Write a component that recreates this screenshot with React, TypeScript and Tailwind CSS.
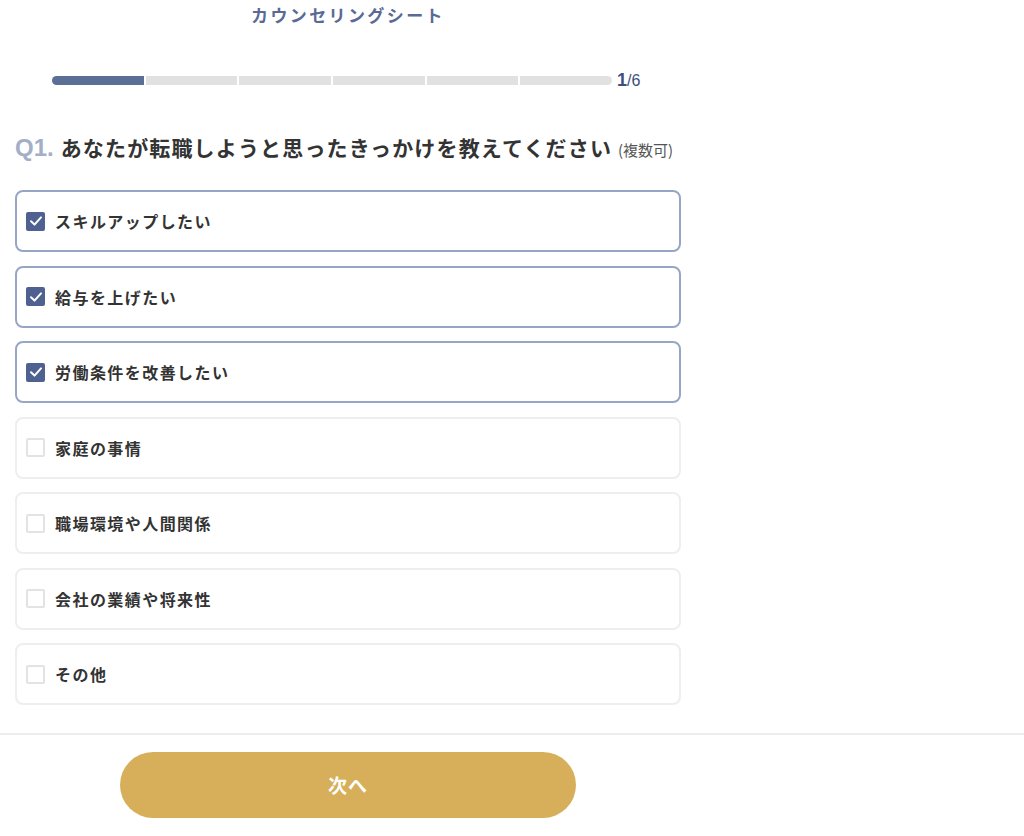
import React, { useState } from 'react'

const options = [
  'スキルアップしたい',
  '給与を上げたい',
  '労働条件を改善したい',
  '家庭の事情',
  '職場環境や人間関係',
  '会社の業績や将来性',
  'その他',
]

const Checkbox = ({ checked }: { checked: boolean }) =>
  checked ? (
    <span className="flex h-[19px] w-[19px] shrink-0 items-center justify-center rounded-[2px] bg-[#4f6190]">
      <svg width="14" height="14" viewBox="0 0 14 14" fill="none">
        <path d="M2 7.3 5.5 10.6 12 3.4" stroke="white" strokeWidth="2" strokeLinecap="round" strokeLinejoin="round" />
      </svg>
    </span>
  ) : (
    <span className="h-[19px] w-[19px] shrink-0 rounded-[2px] border-2 border-[#e3e3e3] bg-white" />
  )

export default function App() {
  const [selected, setSelected] = useState<boolean[]>([true, true, true, false, false, false, false])
  const steps = 6
  const current = 1

  const toggle = (i: number) =>
    setSelected(prev => prev.map((v, j) => (j === i ? !v : v)))

  return (
    <div className="min-h-[836px] w-[1024px] bg-white font-['Noto_Sans_CJK_JP','Noto_Sans',sans-serif] text-[#333]">
      <div className="w-[696px] px-[15px]">
        {/* title */}
        <h1 className="pt-[4px] text-center text-[17px] font-bold leading-[22px] tracking-[0.14em] text-[#5a6a94]">
          カウンセリングシート
        </h1>

        {/* progress */}
        <div className="mt-[41px] flex items-center justify-center gap-[5px]">
          <div className="flex h-[9px] w-[560px] gap-[2px] overflow-hidden rounded-full">
            {Array.from({ length: steps }).map((_, i) => (
              <div key={i} className={`flex-1 ${i < current ? 'bg-[#5a6e96]' : 'bg-[#e1e1e1]'}`} />
            ))}
          </div>
          <div className="w-[27px] whitespace-nowrap font-['Liberation_Sans',sans-serif] text-[#3d4f7e]">
            <span className="text-[18px] font-bold">1</span>
            <span className="text-[16px]">/6</span>
          </div>
        </div>

        {/* question */}
        <h2 className="mt-[36px] flex items-baseline whitespace-nowrap">
          <span className="mr-[7px] font-['Liberation_Sans',sans-serif] text-[24px] font-bold text-[#a3afc6]">Q1.</span>
          <span className="text-[21px] font-bold tracking-[0.055em] text-[#333]">あなたが転職しようと思ったきっかけを教えてください</span>
          <span className="ml-[6px] text-[15px] text-[#555]">(複数可)</span>
        </h2>

        {/* options */}
        <div className="mt-[24px] flex flex-col gap-[13.5px]">
          {options.map((label, i) => (
            <button
              key={label}
              onClick={() => toggle(i)}
              className={`flex h-[62px] items-center gap-[10px] rounded-[8px] border-2 bg-white pl-[9px] text-left ${
                selected[i] ? 'border-[#98a6c6]' : 'border-[#eeeeee]'
              }`}
            >
              <Checkbox checked={selected[i]} />
              <span className="text-[16px] font-bold tracking-[0.09em] text-[#333]">{label}</span>
            </button>
          ))}
        </div>
      </div>

      {/* footer */}
      <div className="mt-[28px] border-t-2 border-[#ededed]">
        <div className="flex w-[696px] justify-center pt-[17px]">
          <button className="h-[66px] w-[456px] rounded-full bg-[#d7af5a] text-[19px] font-bold tracking-[0.05em] text-white">
            次へ
          </button>
        </div>
      </div>
    </div>
  )
}
